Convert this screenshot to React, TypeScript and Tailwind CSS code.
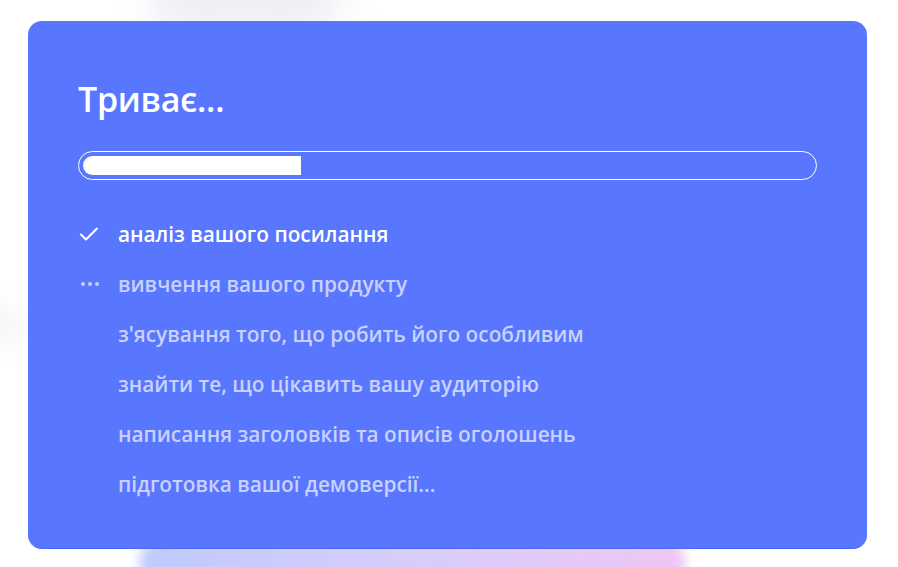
const steps = [
  { label: "аналіз вашого посилання", state: "done" },
  { label: "вивчення вашого продукту", state: "active" },
  { label: "з'ясування того, що робить його особливим", state: "todo" },
  { label: "знайти те, що цікавить вашу аудиторію", state: "todo" },
  { label: "написання заголовків та описів оголошень", state: "todo" },
  { label: "підготовка вашої демоверсії...", state: "todo" },
];

const StepIcon = ({ state }: { state: string }) => {
  if (state === "done") {
    return (
      <svg width="22" height="18" viewBox="0 0 22 18" fill="none">
        <path d="M3 9.5 L8 14.5 L19 3.5" stroke="white" strokeWidth="2" strokeLinecap="round" strokeLinejoin="round" />
      </svg>
    );
  }
  if (state === "active") {
    return (
      <div className="flex gap-[3px] pl-[3px]">
        <span className="w-[4px] h-[4px] rounded-full bg-[#c9d1ff]" />
        <span className="w-[4px] h-[4px] rounded-full bg-[#c9d1ff]" />
        <span className="w-[4px] h-[4px] rounded-full bg-[#c9d1ff]" />
      </div>
    );
  }
  return null;
};

export default function App() {
  return (
    <div
      className="relative w-[898px] h-[567px] overflow-hidden bg-white pt-[21px] pl-[28px]"
      style={{ fontFamily: '"Open Sans", "Noto Sans", sans-serif' }}
    >
      {/* soft blobs behind the card */}
      <div className="absolute left-[150px] top-[-30px] w-[190px] h-[60px] rounded-full bg-[#ededf4] blur-[18px]" />
      <div className="absolute left-[-20px] top-[305px] w-[45px] h-[40px] rounded-full bg-[#f7f7fa] blur-[10px]" />
      <div className="absolute left-[140px] top-[540px] w-[545px] h-[60px] rounded-[20px] bg-gradient-to-r from-[#bfc9ff] via-[#d7cdfb] to-[#eec6f4] blur-[6px]" />

      <div className="relative w-[839px] h-[528px] rounded-[14px] bg-[#5877fe] border-b border-[#4a66f2] px-[50px] pt-[58px]">
        <h1 className="text-[34px] leading-[40px] font-semibold text-white tracking-[-0.3px]">Триває...</h1>

        <div className="mt-[32px] h-[29px] rounded-full border border-white p-[4px] flex">
          <div className="w-[218px] h-full rounded-l-full bg-white" />
        </div>

        <ul className="mt-[42px] flex flex-col gap-[26px]">
          {steps.map((s) => (
            <li key={s.label} className="flex items-center h-[24px]">
              <div className="w-[40px] flex items-center">
                <StepIcon state={s.state} />
              </div>
              <span
                className={`text-[20.8px] font-semibold leading-[24px] ${
                  s.state === "done" ? "text-white" : "text-[#c9d1ff]"
                }`}
              >
                {s.label}
              </span>
            </li>
          ))}
        </ul>
      </div>
    </div>
  );
}
